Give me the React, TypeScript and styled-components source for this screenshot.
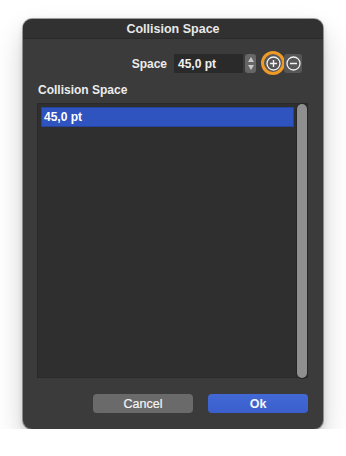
import React, { useState } from 'react';
import styled, { createGlobalStyle } from 'styled-components';

const GlobalStyle = createGlobalStyle`
    html, body {
        margin: 0;
        padding: 0;
        background: #ffffff;
    }
    body {
        font-family: "Liberation Sans", Arial, sans-serif;
        -webkit-font-smoothing: antialiased;
    }
`;

const Page = styled.div`
    padding: 19px 0 0 23px;
`;

const Window = styled.div`
    display: flex;
    flex-direction: column;
    width: 300px;
    height: 410px;
    border-radius: 9px;
    overflow: hidden;
    background-color: #3b3b3b;
    box-shadow: 0 0 0 1px rgba(0, 0, 0, 0.35), 0 14px 28px rgba(0, 0, 0, 0.2), 0 2px 6px rgba(0, 0, 0, 0.15);
`;

const TitleBar = styled.div`
    display: flex;
    align-items: center;
    justify-content: center;
    height: 20px;
    background-color: #313131;
    border-bottom: 1px solid #2a2a2a;
    box-sizing: border-box;
    color: #e8e8e8;
    font-size: 12.5px;
    font-weight: bold;
`;

const Body = styled.div`
    display: flex;
    flex-direction: column;
    flex: 1;
    padding: 15px 15px 16px 14px;
`;

const SpaceRow = styled.div`
    display: flex;
    align-items: center;
    justify-content: flex-end;
    height: 19px;
    padding-right: 6px;
`;

const Label = styled.span`
    color: #ececec;
    font-size: 12px;
    font-weight: bold;
    margin-right: 7px;
`;

const Field = styled.div`
    display: flex;
    align-items: center;
    width: 69px;
    height: 19px;
    padding-left: 4px;
    box-sizing: border-box;
    background-color: #2a2a2a;
    color: #f0f0f0;
    font-size: 12px;
    font-weight: bold;
`;

const Stepper = styled.div`
    display: flex;
    flex-direction: column;
    align-items: center;
    justify-content: space-between;
    width: 11px;
    height: 19px;
    margin-left: 2px;
    padding: 3px 0;
    box-sizing: border-box;
    border-radius: 3px;
    background-color: #666666;
`;

const Arrow = styled.div<{ $up?: boolean }>`
    width: 0;
    height: 0;
    border-left: 3px solid transparent;
    border-right: 3px solid transparent;
    ${(p) => (p.$up ? 'border-bottom: 5px solid #c8c8c8;' : 'border-top: 5px solid #c8c8c8;')}
`;

const IconGroup = styled.div`
    display: flex;
    gap: 2px;
    margin-left: 8px;
`;

const IconButton = styled.div`
    position: relative;
    display: flex;
    align-items: center;
    justify-content: center;
    width: 18px;
    height: 19px;
    border-radius: 3px;
    background-color: #575757;
`;

const FocusRing = styled.div`
    position: absolute;
    left: -3px;
    top: -3px;
    width: 18px;
    height: 18px;
    border: 3px solid #f09a26;
    border-radius: 50%;
    pointer-events: none;
`;

const SectionTitle = styled.div`
    margin-top: 9px;
    line-height: 16px;
    color: #ececec;
    font-size: 12px;
    font-weight: bold;
    padding-left: 1px;
`;

const List = styled.div`
    display: flex;
    margin-top: 5px;
    height: 275px;
    background-color: #2f2f2f;
    box-shadow: inset 0 0 0 1px #2a2a2a;
`;

const Rows = styled.div`
    flex: 1;
    padding: 4px 3px 4px 4px;
`;

const Row = styled.div<{ $selected?: boolean }>`
    display: flex;
    align-items: center;
    height: 20px;
    padding-left: 3px;
    box-sizing: border-box;
    background-color: ${(p) => (p.$selected ? '#2f54c0' : 'transparent')};
    box-shadow: ${(p) => (p.$selected ? 'inset 0 0 0 1px #26449a' : 'none')};
    color: #ffffff;
    font-size: 12px;
    font-weight: bold;
`;

const ScrollTrack = styled.div`
    width: 10px;
    padding: 1px 1px 0 0;
`;

const ScrollThumb = styled.div`
    height: 100%;
    border-radius: 5px;
    background-color: #8f8f8f;
    box-shadow: 0 0 0 1px #262626;
`;

const Footer = styled.div`
    display: flex;
    justify-content: flex-end;
    gap: 15px;
    margin-top: 16px;
`;

const Button = styled.button<{ $primary?: boolean }>`
    width: 100px;
    height: 19px;
    border: none;
    border-radius: 4px;
    padding: 0;
    background: ${(p) => (p.$primary ? 'linear-gradient(#4269d6, #3a5fcd)' : '#6a6a6a')};
    color: #f4f4f4;
    font-family: inherit;
    font-size: 12.5px;
    font-weight: ${(p) => (p.$primary ? 'bold' : 'normal')};
    -webkit-text-stroke: ${(p) => (p.$primary ? '0' : '0.2px #f4f4f4')};
`;

const CircleIcon = ({ plus }: { plus?: boolean }) => (
    <svg width="15" height="15" viewBox="0 0 15 15">
        <circle cx="7.5" cy="7.5" r="6.5" fill="none" stroke="#f2f2f2" strokeWidth="1.3" />
        <line x1="4" y1="7.5" x2="11" y2="7.5" stroke="#f2f2f2" strokeWidth="1.4" />
        {plus && <line x1="7.5" y1="4" x2="7.5" y2="11" stroke="#f2f2f2" strokeWidth="1.4" />}
    </svg>
);

export default function App() {
    const [values] = useState(['45,0 pt']);

    return (
        <Page>
            <GlobalStyle />
            <Window>
                <TitleBar>Collision Space</TitleBar>
                <Body>
                    <SpaceRow>
                        <Label>Space</Label>
                        <Field>45,0 pt</Field>
                        <Stepper>
                            <Arrow $up />
                            <Arrow />
                        </Stepper>
                        <IconGroup>
                            <IconButton>
                                <CircleIcon plus />
                                <FocusRing />
                            </IconButton>
                            <IconButton>
                                <CircleIcon />
                            </IconButton>
                        </IconGroup>
                    </SpaceRow>
                    <SectionTitle>Collision Space</SectionTitle>
                    <List>
                        <Rows>
                            {values.map((v) => (
                                <Row key={v} $selected>{v}</Row>
                            ))}
                        </Rows>
                        <ScrollTrack>
                            <ScrollThumb />
                        </ScrollTrack>
                    </List>
                    <Footer>
                        <Button>Cancel</Button>
                        <Button $primary>Ok</Button>
                    </Footer>
                </Body>
            </Window>
        </Page>
    );
}
